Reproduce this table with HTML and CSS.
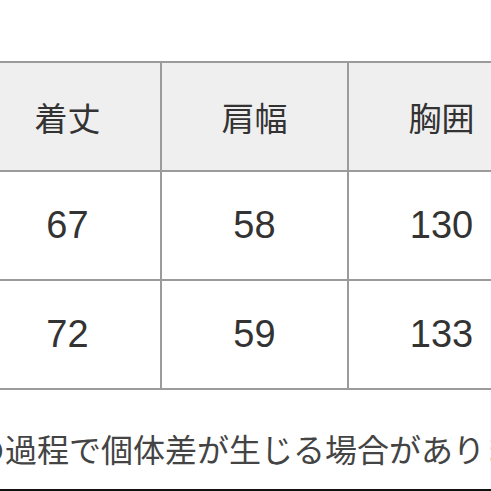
FILE: index.html
```html
<!DOCTYPE html>
<html lang="ja">
<head>
<meta charset="utf-8">
<link rel="stylesheet" href="styles.css">
</head>
<body>
<div class="page">
  <div class="content">
    <div class="size-table">
      <div class="cell head">着丈</div>
      <div class="cell head">肩幅</div>
      <div class="cell head">胸囲</div>
      <div class="cell num">67</div>
      <div class="cell num">58</div>
      <div class="cell num">130</div>
      <div class="cell num">72</div>
      <div class="cell num">59</div>
      <div class="cell num">133</div>
    </div>
    <p class="note">の過程で個体差が生じる場合があります。</p>
  </div>
</div>
</body>
</html>
```

FILE: styles.css
```css
html, body {
  margin: 0;
  padding: 0;
  background: #fff;
}
.page {
  width: 491px;
  height: 491px;
  box-sizing: border-box;
  overflow: hidden;
  border-bottom: 2px solid #111;
  font-family: "Noto Sans CJK JP", "Noto Sans", sans-serif;
  color: #333;
}
.content {
  margin-left: -27px;
  padding-top: 61px;
  width: 700px;
}
.size-table {
  display: grid;
  grid-template-columns: repeat(3, 185px);
  grid-auto-rows: 107px;
  gap: 2px;
  padding: 2px;
  background: #9b9b9b;
  width: max-content;
}
.cell {
  display: flex;
  align-items: center;
  justify-content: center;
  background: #fff;
}
.head {
  background: #efefef;
  font-size: 33px;
  color: #333;
}
.num {
  font-family: "Liberation Sans", Arial, sans-serif;
  font-size: 38px;
  color: #333;
}
.note {
  margin: 38px 0 0 0;
  font-size: 32px;
  line-height: 40px;
  white-space: nowrap;
  color: #444;
}
```
